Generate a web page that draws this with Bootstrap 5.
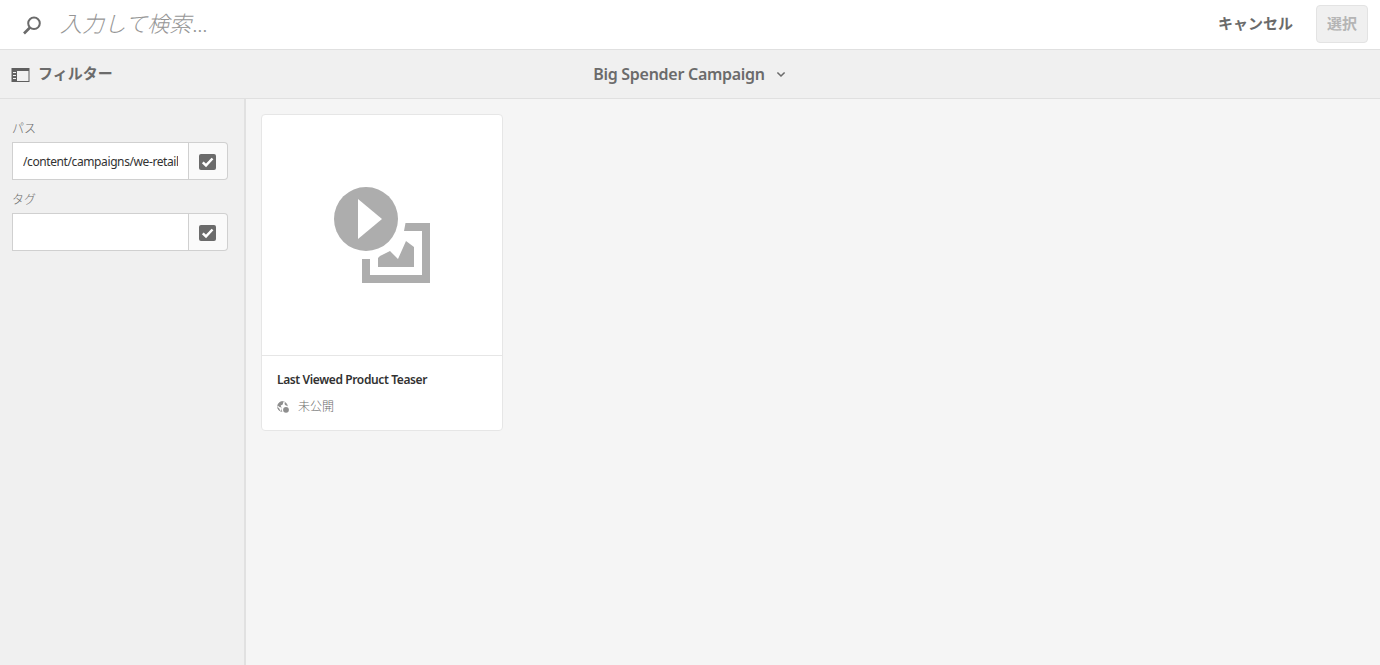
<!DOCTYPE html>
<html lang="ja">
<head>
<meta charset="utf-8">
<meta name="viewport" content="width=device-width, initial-scale=1">
<title>Big Spender Campaign</title>
<link href="https://cdn.jsdelivr.net/npm/bootstrap@5.3.0/dist/css/bootstrap.min.css" rel="stylesheet">
<style>
body{font-family:Lato,"Noto Sans CJK JP",sans-serif;background:#f5f5f5;color:#6b6b6b;font-size:12px;line-height:1.5}
.search-bar{height:50px;border-bottom:1px solid #e0e0e0;padding:0 12px 2px 22px}
.search-input{font-size:22px;line-height:32px;font-style:italic;font-weight:300;width:400px;outline:0;word-spacing:-4px;margin-left:18px}
.search-input::placeholder{color:#969696;opacity:1}
.action-link{font-size:15px;color:#6b6b6b;margin-right:23px}
.btn-select{width:52px;height:38px;font-size:15px}
.btn-select:disabled{opacity:1;background:#f0f0f0;border:1px solid #e3e3e3;border-radius:4px;color:#b5b5b5}
.filter-bar{height:49px;background:#f0f0f0;border-bottom:1px solid #e0e0e0;display:grid;grid-template-columns:1fr auto 1fr;padding:0 12px 0 11px}
.filter-name{font-size:15px;color:#6b6b6b;line-height:20px;padding-bottom:2px}
.page-name{font-family:"Noto Sans",sans-serif;font-size:16px;font-weight:600;letter-spacing:-.28px;line-height:24px}
.side-panel{width:246px;background:#f0f0f0;border-right:2px solid #e1e1e1;padding:21px 16px 0 12px}
.field-name{font-size:12px;line-height:18px;margin-bottom:4px;color:#6b6b6b;font-weight:300}
.field-row{height:38px;margin-bottom:11px}
.field-box{width:0;border:1px solid #d0d0d0;border-radius:0;padding:2px 10px 0;font-size:12px;color:#323232;font-family:"Noto Sans",sans-serif;letter-spacing:-.4px}
.field-check{width:39px;background:#fafafa;border:1px solid #d0d0d0;border-radius:0 4px 4px 0;padding:2px 1px 0 0}
.asset-card{width:242px;border:1px solid #e6e6e6;border-radius:4px}
.asset-thumb{height:241px;border-bottom:1px solid #e6e6e6}
.asset-info{height:74px;padding:15px 15px 0}
.asset-name{font-family:"Noto Sans",sans-serif;font-size:12px;font-weight:600;letter-spacing:-.38px;line-height:18px;color:#323232}
.asset-status{font-size:12px;line-height:18px;color:#6b6b6b;margin-top:9px;font-weight:300}
</style>
</head>
<body class="vh-100 d-flex flex-column overflow-hidden">
<header class="search-bar bg-white d-flex align-items-center flex-shrink-0">
  <svg width="20" height="20" viewBox="0 0 20 20" fill="none" stroke="#6b6b6b" class="mt-1 flex-shrink-0"><circle cx="12" cy="7.300" r="5.800" stroke-width="2"/><path d="M8 11.500L2 17.500" stroke-width="2.600"/></svg>
  <input class="search-input border-0 bg-transparent p-0" type="text" placeholder="入力して検索 ...">
  <span class="action-link fw-bold ms-auto">キャンセル</span>
  <button class="btn btn-select fw-bold p-0" type="button" disabled>選択</button>
</header>
<nav class="filter-bar align-items-center flex-shrink-0">
  <div class="d-flex align-items-center">
    <svg width="19" height="14" viewBox="0 0 19 14" style="margin-top:2px"><path fill="#5f5f5f" d="M.5 0h18v14H.5z"/><path fill="#f0f0f0" d="M6 3h11.500v10H6zM2 4h3v1H2zM2 7h3v1H2zM2 10h3v1H2z"/></svg>
    <span class="filter-name fw-bold ms-2">フィルター</span>
  </div>
  <div class="d-flex align-items-center">
    <span class="page-name">Big Spender Campaign</span>
    <svg width="10" height="7" viewBox="0 0 10 7" fill="none" stroke="#6b6b6b" stroke-width="1.6" style="margin-left:11px"><path d="M1.400 1.500L5 5L8.600 1.500"/></svg>
  </div>
</nav>
<div class="d-flex flex-grow-1">
  <aside class="side-panel flex-shrink-0">
    <div class="field-name">パス</div>
    <div class="field-row d-flex">
      <input class="field-box flex-grow-1" type="text" value="/content/campaigns/we-retail">
      <div class="field-check border-start-0 d-flex align-items-center justify-content-center"><svg width="17" height="16" viewBox="0 0 17 16"><rect width="17" height="16" rx="2" fill="#6b6b6b"/><path d="M3.800 8.300l3.200 3.100L13.500 4.500" fill="none" stroke="#fff" stroke-width="2.500"/></svg></div>
    </div>
    <div class="field-name">タグ</div>
    <div class="field-row d-flex">
      <input class="field-box flex-grow-1" type="text">
      <div class="field-check border-start-0 d-flex align-items-center justify-content-center"><svg width="17" height="16" viewBox="0 0 17 16"><rect width="17" height="16" rx="2" fill="#6b6b6b"/><path d="M3.800 8.300l3.200 3.100L13.500 4.500" fill="none" stroke="#fff" stroke-width="2.500"/></svg></div>
    </div>
  </aside>
  <main class="flex-grow-1" style="padding:15px">
    <article class="asset-card bg-white overflow-hidden">
      <div class="asset-thumb d-flex align-items-center justify-content-center">
        <svg width="96" height="96" viewBox="0 0 96 96" fill="#adadad"><circle cx="32" cy="32" r="32"/><path fill="#fff" d="M24 12v40l24-20z"/><path d="M71.500 36H96v60H28V72h8v16h52V44H70z"/><path d="M44 80v-9l2-2 10-5 8 8 8-18 8 6v20z"/></svg>
      </div>
      <div class="asset-info">
        <div class="asset-name">Last Viewed Product Teaser</div>
        <div class="asset-status d-flex align-items-center">
          <svg width="12" height="12" viewBox="0 0 12 12"><circle cx="5.500" cy="5.500" r="5" fill="#fff" stroke="#bbb" stroke-width=".8"/><path fill="#8e8e8e" d="M6.500.4A5.200 5.200 0 0 0 .5 4.500L2.500 6l2 .5.500 1.500-.8 1 .3 1.500L3.300 10 2.300 7.500.4 6A5.200 5.200 0 0 0 5 10.700V7L4 5.500l-.3-1 2-1zM8 1.200L7.500 3l1 1.300 2 .8A5.200 5.200 0 0 0 8 1.200z"/><circle cx="8.800" cy="8.800" r="3.700" fill="#fff"/><circle cx="9" cy="8.800" r="2.900" fill="#8e8e8e"/></svg>
          <span style="margin-left:9px">未公開</span>
        </div>
      </div>
    </article>
  </main>
</div>
<script src="https://cdn.jsdelivr.net/npm/bootstrap@5.3.0/dist/js/bootstrap.bundle.min.js"></script>
</body>
</html>
